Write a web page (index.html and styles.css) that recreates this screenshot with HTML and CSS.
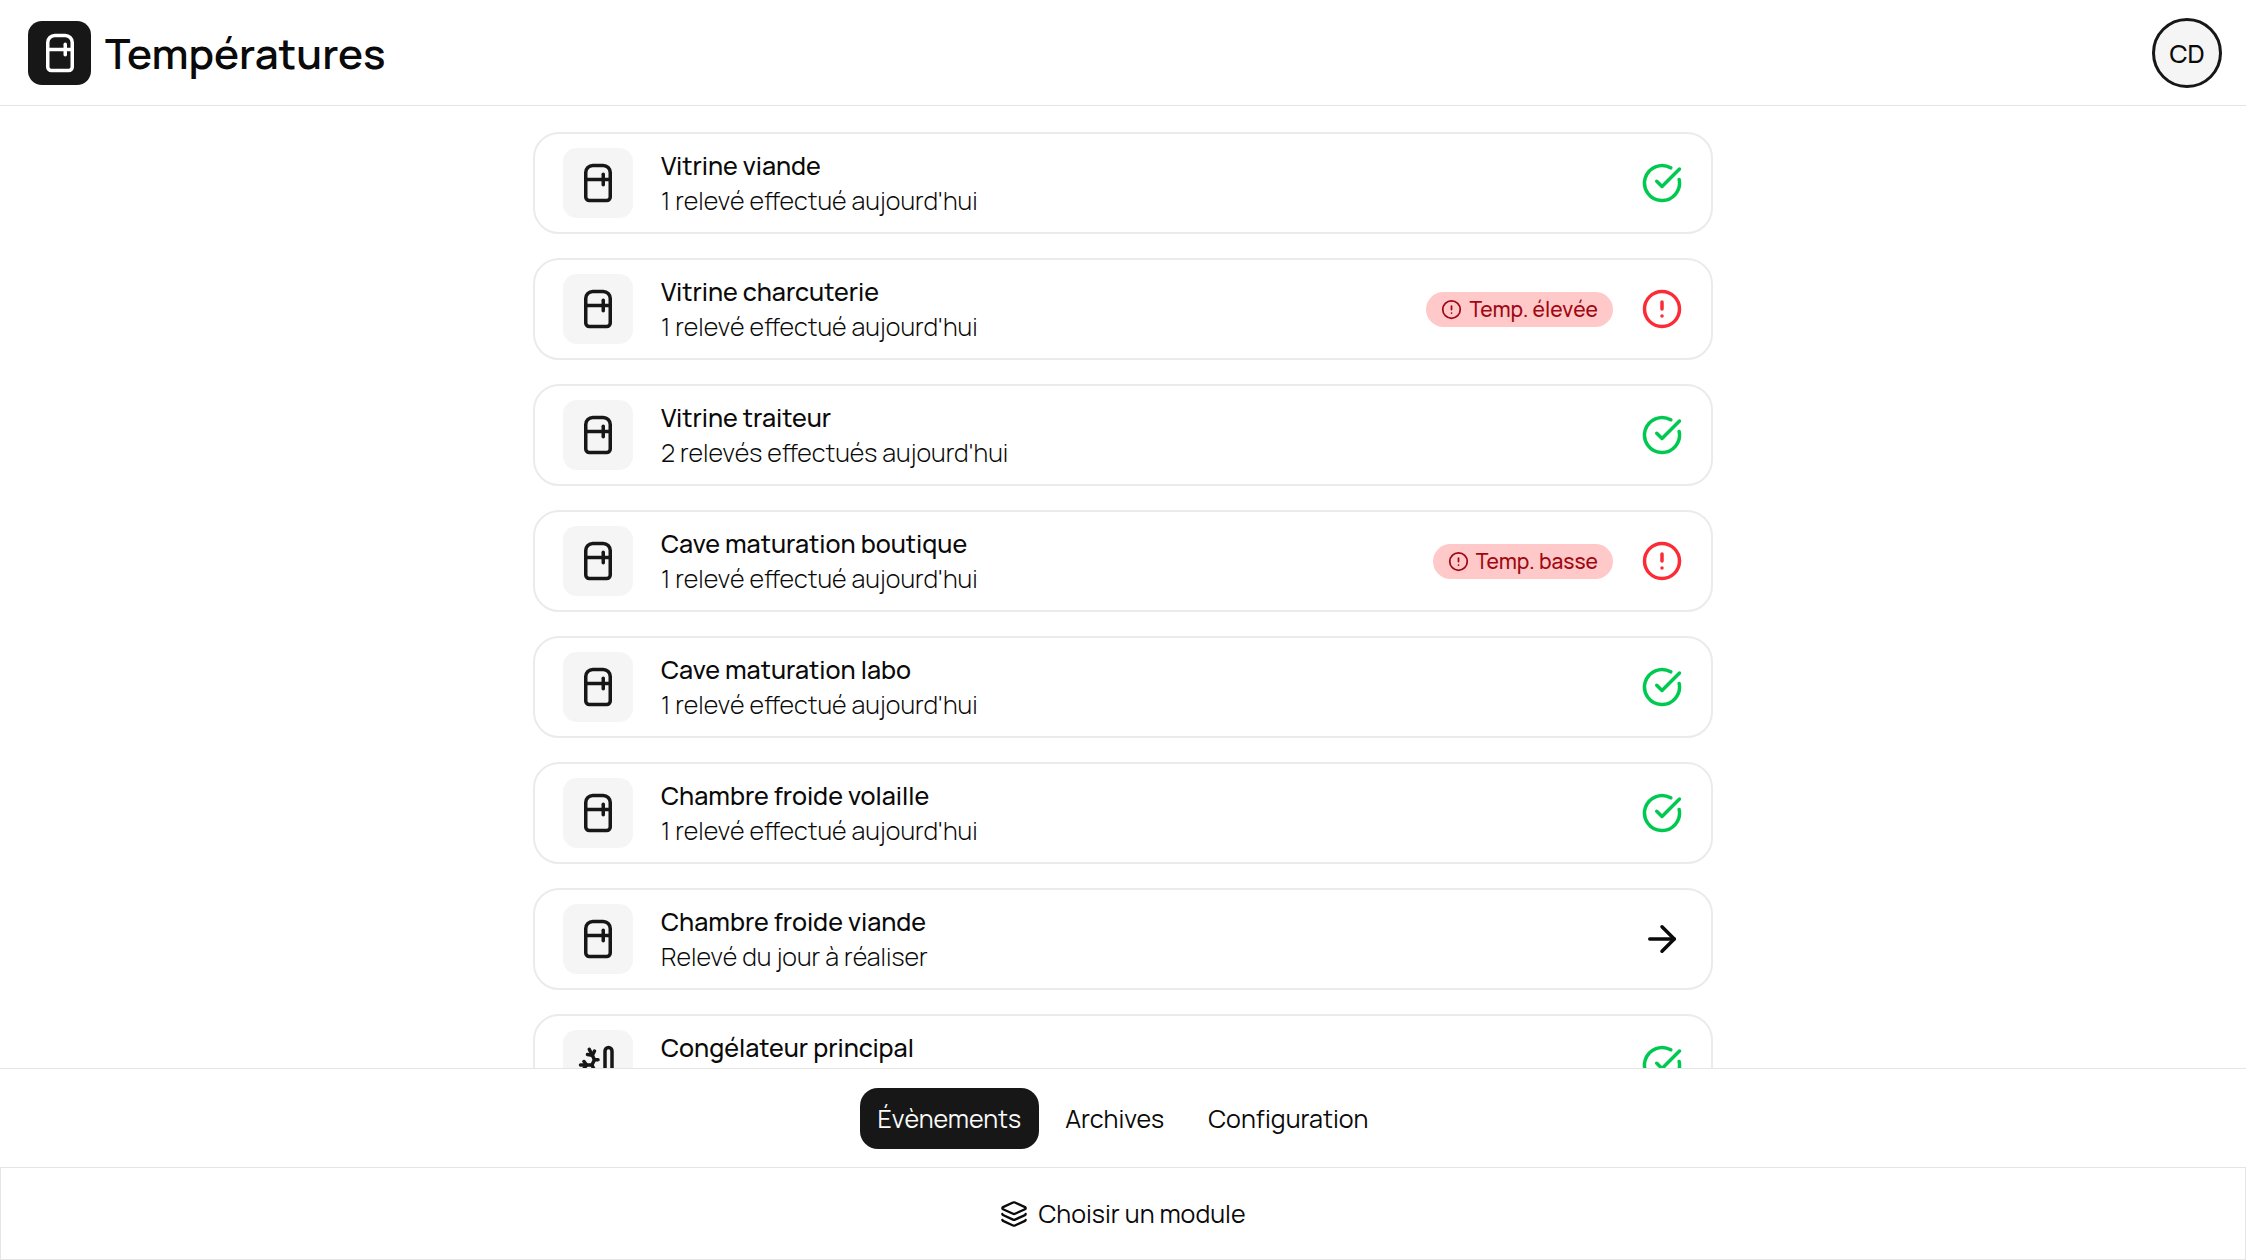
FILE: index.html
```html
<!DOCTYPE html>
<html lang="fr">
<head>
    <meta charset="UTF-8">
    <meta name="viewport" content="width=device-width, initial-scale=1.0">
    <title>Températures</title>
    <link rel="stylesheet" href="styles.css">
</head>
<body>

<!-- Icônes partagées -->
<svg class="sprite" aria-hidden="true">
    <symbol id="fridge" viewBox="0 0 24 24">
        <path d="M5 6a4 4 0 0 1 4-4h6a4 4 0 0 1 4 4v14a2 2 0 0 1-2 2H7a2 2 0 0 1-2-2Z"/>
        <path d="M5 10h14"/>
        <path d="M15 7v6"/>
    </symbol>
    <symbol id="freezer" viewBox="0 0 24 24">
        <path d="m10 20-1.25-2.5L6 18"/>
        <path d="M10 4 8.75 6.5 6 6"/>
        <path d="M10.585 15H10"/>
        <path d="M2 12h6.5L10 9"/>
        <path d="M20 14.54a4 4 0 1 1-4 0V4a2 2 0 0 1 4 0z"/>
        <path d="m4 10 1.5 2L4 14"/>
        <path d="m7 21 3-6-1.5-3"/>
        <path d="m7 3 3 6h2"/>
    </symbol>
    <symbol id="check" viewBox="0 0 24 24">
        <path d="M21.801 10A10 10 0 1 1 17 3.335"/>
        <path d="m9 11 3 3L22 4"/>
    </symbol>
    <symbol id="alert" viewBox="0 0 24 24">
        <circle cx="12" cy="12" r="10"/>
        <path d="M12 8v4"/>
        <path d="M12 16h.01"/>
    </symbol>
    <symbol id="arrow" viewBox="0 0 24 24">
        <path d="M5 12h14"/>
        <path d="m12 5 7 7-7 7"/>
    </symbol>
    <symbol id="layers" viewBox="0 0 24 24">
        <path d="M12.83 2.18a2 2 0 0 0-1.66 0L2.6 6.08a1 1 0 0 0 0 1.83l8.58 3.91a2 2 0 0 0 1.66 0l8.58-3.9a1 1 0 0 0 0-1.83z"/>
        <path d="M2 12a1 1 0 0 0 .58.91l8.6 3.91a2 2 0 0 0 1.65 0l8.58-3.9A1 1 0 0 0 22 12"/>
        <path d="M2 17a1 1 0 0 0 .58.91l8.6 3.91a2 2 0 0 0 1.65 0l8.58-3.9A1 1 0 0 0 22 17"/>
    </symbol>
</svg>

<header class="header">
    <div class="brand">
        <span class="brand-icon"><svg class="icon"><use href="#fridge"/></svg></span>
        <h1 class="brand-title">Températures</h1>
    </div>
    <button class="avatar" type="button">CD</button>
</header>

<main class="content">
    <ul class="list">
        <li>
            <a class="card" href="#">
                <span class="card-icon"><svg class="icon"><use href="#fridge"/></svg></span>
                <span class="card-text">
                    <span class="card-name">Vitrine viande</span>
                    <span class="card-info">1 relevé effectué aujourd'hui</span>
                </span>
                <svg class="icon icon-ok"><use href="#check"/></svg>
            </a>
        </li>
        <li>
            <a class="card" href="#">
                <span class="card-icon"><svg class="icon"><use href="#fridge"/></svg></span>
                <span class="card-text">
                    <span class="card-name">Vitrine charcuterie</span>
                    <span class="card-info">1 relevé effectué aujourd'hui</span>
                </span>
                <span class="badge"><svg class="icon icon-xs"><use href="#alert"/></svg>Temp. élevée</span>
                <svg class="icon icon-alert"><use href="#alert"/></svg>
            </a>
        </li>
        <li>
            <a class="card" href="#">
                <span class="card-icon"><svg class="icon"><use href="#fridge"/></svg></span>
                <span class="card-text">
                    <span class="card-name">Vitrine traiteur</span>
                    <span class="card-info">2 relevés effectués aujourd'hui</span>
                </span>
                <svg class="icon icon-ok"><use href="#check"/></svg>
            </a>
        </li>
        <li>
            <a class="card" href="#">
                <span class="card-icon"><svg class="icon"><use href="#fridge"/></svg></span>
                <span class="card-text">
                    <span class="card-name">Cave maturation boutique</span>
                    <span class="card-info">1 relevé effectué aujourd'hui</span>
                </span>
                <span class="badge"><svg class="icon icon-xs"><use href="#alert"/></svg>Temp. basse</span>
                <svg class="icon icon-alert"><use href="#alert"/></svg>
            </a>
        </li>
        <li>
            <a class="card" href="#">
                <span class="card-icon"><svg class="icon"><use href="#fridge"/></svg></span>
                <span class="card-text">
                    <span class="card-name">Cave maturation labo</span>
                    <span class="card-info">1 relevé effectué aujourd'hui</span>
                </span>
                <svg class="icon icon-ok"><use href="#check"/></svg>
            </a>
        </li>
        <li>
            <a class="card" href="#">
                <span class="card-icon"><svg class="icon"><use href="#fridge"/></svg></span>
                <span class="card-text">
                    <span class="card-name">Chambre froide volaille</span>
                    <span class="card-info">1 relevé effectué aujourd'hui</span>
                </span>
                <svg class="icon icon-ok"><use href="#check"/></svg>
            </a>
        </li>
        <li>
            <a class="card" href="#">
                <span class="card-icon"><svg class="icon"><use href="#fridge"/></svg></span>
                <span class="card-text">
                    <span class="card-name">Chambre froide viande</span>
                    <span class="card-info">Relevé du jour à réaliser</span>
                </span>
                <svg class="icon"><use href="#arrow"/></svg>
            </a>
        </li>
        <li>
            <a class="card" href="#">
                <span class="card-icon"><svg class="icon"><use href="#freezer"/></svg></span>
                <span class="card-text">
                    <span class="card-name">Congélateur principal</span>
                    <span class="card-info">1 relevé effectué aujourd'hui</span>
                </span>
                <svg class="icon icon-ok"><use href="#check"/></svg>
            </a>
        </li>
    </ul>
</main>

<nav class="tabs">
    <a class="tab tab-active" href="#">Évènements</a>
    <a class="tab" href="#">Archives</a>
    <a class="tab" href="#">Configuration</a>
</nav>

<button class="module-button" type="button">
    <svg class="icon icon-sm"><use href="#layers"/></svg>
    Choisir un module
</button>

</body>
</html>
```
FILE: styles.css
```css
* {
    box-sizing: border-box;
}

html, body {
    margin: 0;
    height: 100%;
}

body {
    display: flex;
    flex-direction: column;
    overflow: hidden;
    font-family: Manrope, Inter, sans-serif;
    font-size: 25px;
    line-height: 35px;
    color: #0a0a0a;
    background-color: #ffffff;
}

a {
    color: inherit;
    text-decoration: none;
}

button {
    font: inherit;
    color: inherit;
    cursor: pointer;
}

.sprite {
    display: none;
}

/* Icônes */
.icon {
    flex-shrink: 0;
    width: 42px;
    height: 42px;
    fill: none;
    stroke: currentColor;
    stroke-width: 2;
    stroke-linecap: round;
    stroke-linejoin: round;
}

.icon-sm {
    width: 28px;
    height: 28px;
}

.icon-xs {
    width: 21px;
    height: 21px;
}

.icon-ok {
    color: #00c950;
}

.icon-alert {
    color: #fb2c36;
}

/* En-tête */
.header {
    display: flex;
    align-items: center;
    justify-content: space-between;
    padding: 18px 24px 17px 28px;
    border-bottom: 1px solid #e5e5e5;
}

.brand {
    display: flex;
    align-items: center;
    gap: 14px;
}

.brand-icon {
    display: flex;
    align-items: center;
    justify-content: center;
    width: 63px;
    height: 64px;
    border-radius: 14px;
    color: #ffffff;
    background-color: #171717;
}

.brand-title {
    margin: 0;
    font-size: 42px;
    font-weight: 600;
    line-height: 56px;
}

.avatar {
    width: 70px;
    height: 70px;
    padding: 0;
    border: 3px solid #171717;
    border-radius: 50%;
    font-weight: 500;
    background-color: #f5f5f5;
}

/* Liste des équipements */
.content {
    flex: 1;
    min-height: 0;
    padding: 26px 28px;
    overflow-y: auto;
    scrollbar-width: none;
}

.list {
    display: flex;
    flex-direction: column;
    gap: 24px;
    max-width: 1180px;
    margin: 0 auto;
    padding: 0;
    list-style: none;
}

.card {
    display: flex;
    align-items: center;
    gap: 28px;
    padding: 14px 28px;
    border: 2px solid #ebebeb;
    border-radius: 26px;
}

.card-icon {
    display: flex;
    align-items: center;
    justify-content: center;
    width: 70px;
    height: 70px;
    border-radius: 14px;
    color: #171717;
    background-color: #f5f5f5;
}

.card-text {
    display: flex;
    flex: 1;
    flex-direction: column;
}

.card-name {
    font-weight: 500;
}

.card-info {
    font-weight: 300;
}

.badge {
    display: flex;
    align-items: center;
    gap: 7px;
    padding: 0 15px;
    border-radius: 18px;
    font-size: 21px;
    font-weight: 500;
    color: #9f0712;
    background-color: #ffc9c9;
}

/* Onglets */
.tabs {
    display: flex;
    justify-content: center;
    gap: 8px;
    padding: 19px 28px 18px;
    border-top: 1px solid #e5e5e5;
}

.tab {
    padding: 13px 18px;
    border-radius: 18px;
}

.tab-active {
    color: #fafafa;
    background-color: #171717;
}

/* Choix du module */
.module-button {
    display: flex;
    align-items: center;
    justify-content: center;
    gap: 10px;
    padding: 28px;
    border: 1px solid #e5e5e5;
    background-color: #ffffff;
}
```
